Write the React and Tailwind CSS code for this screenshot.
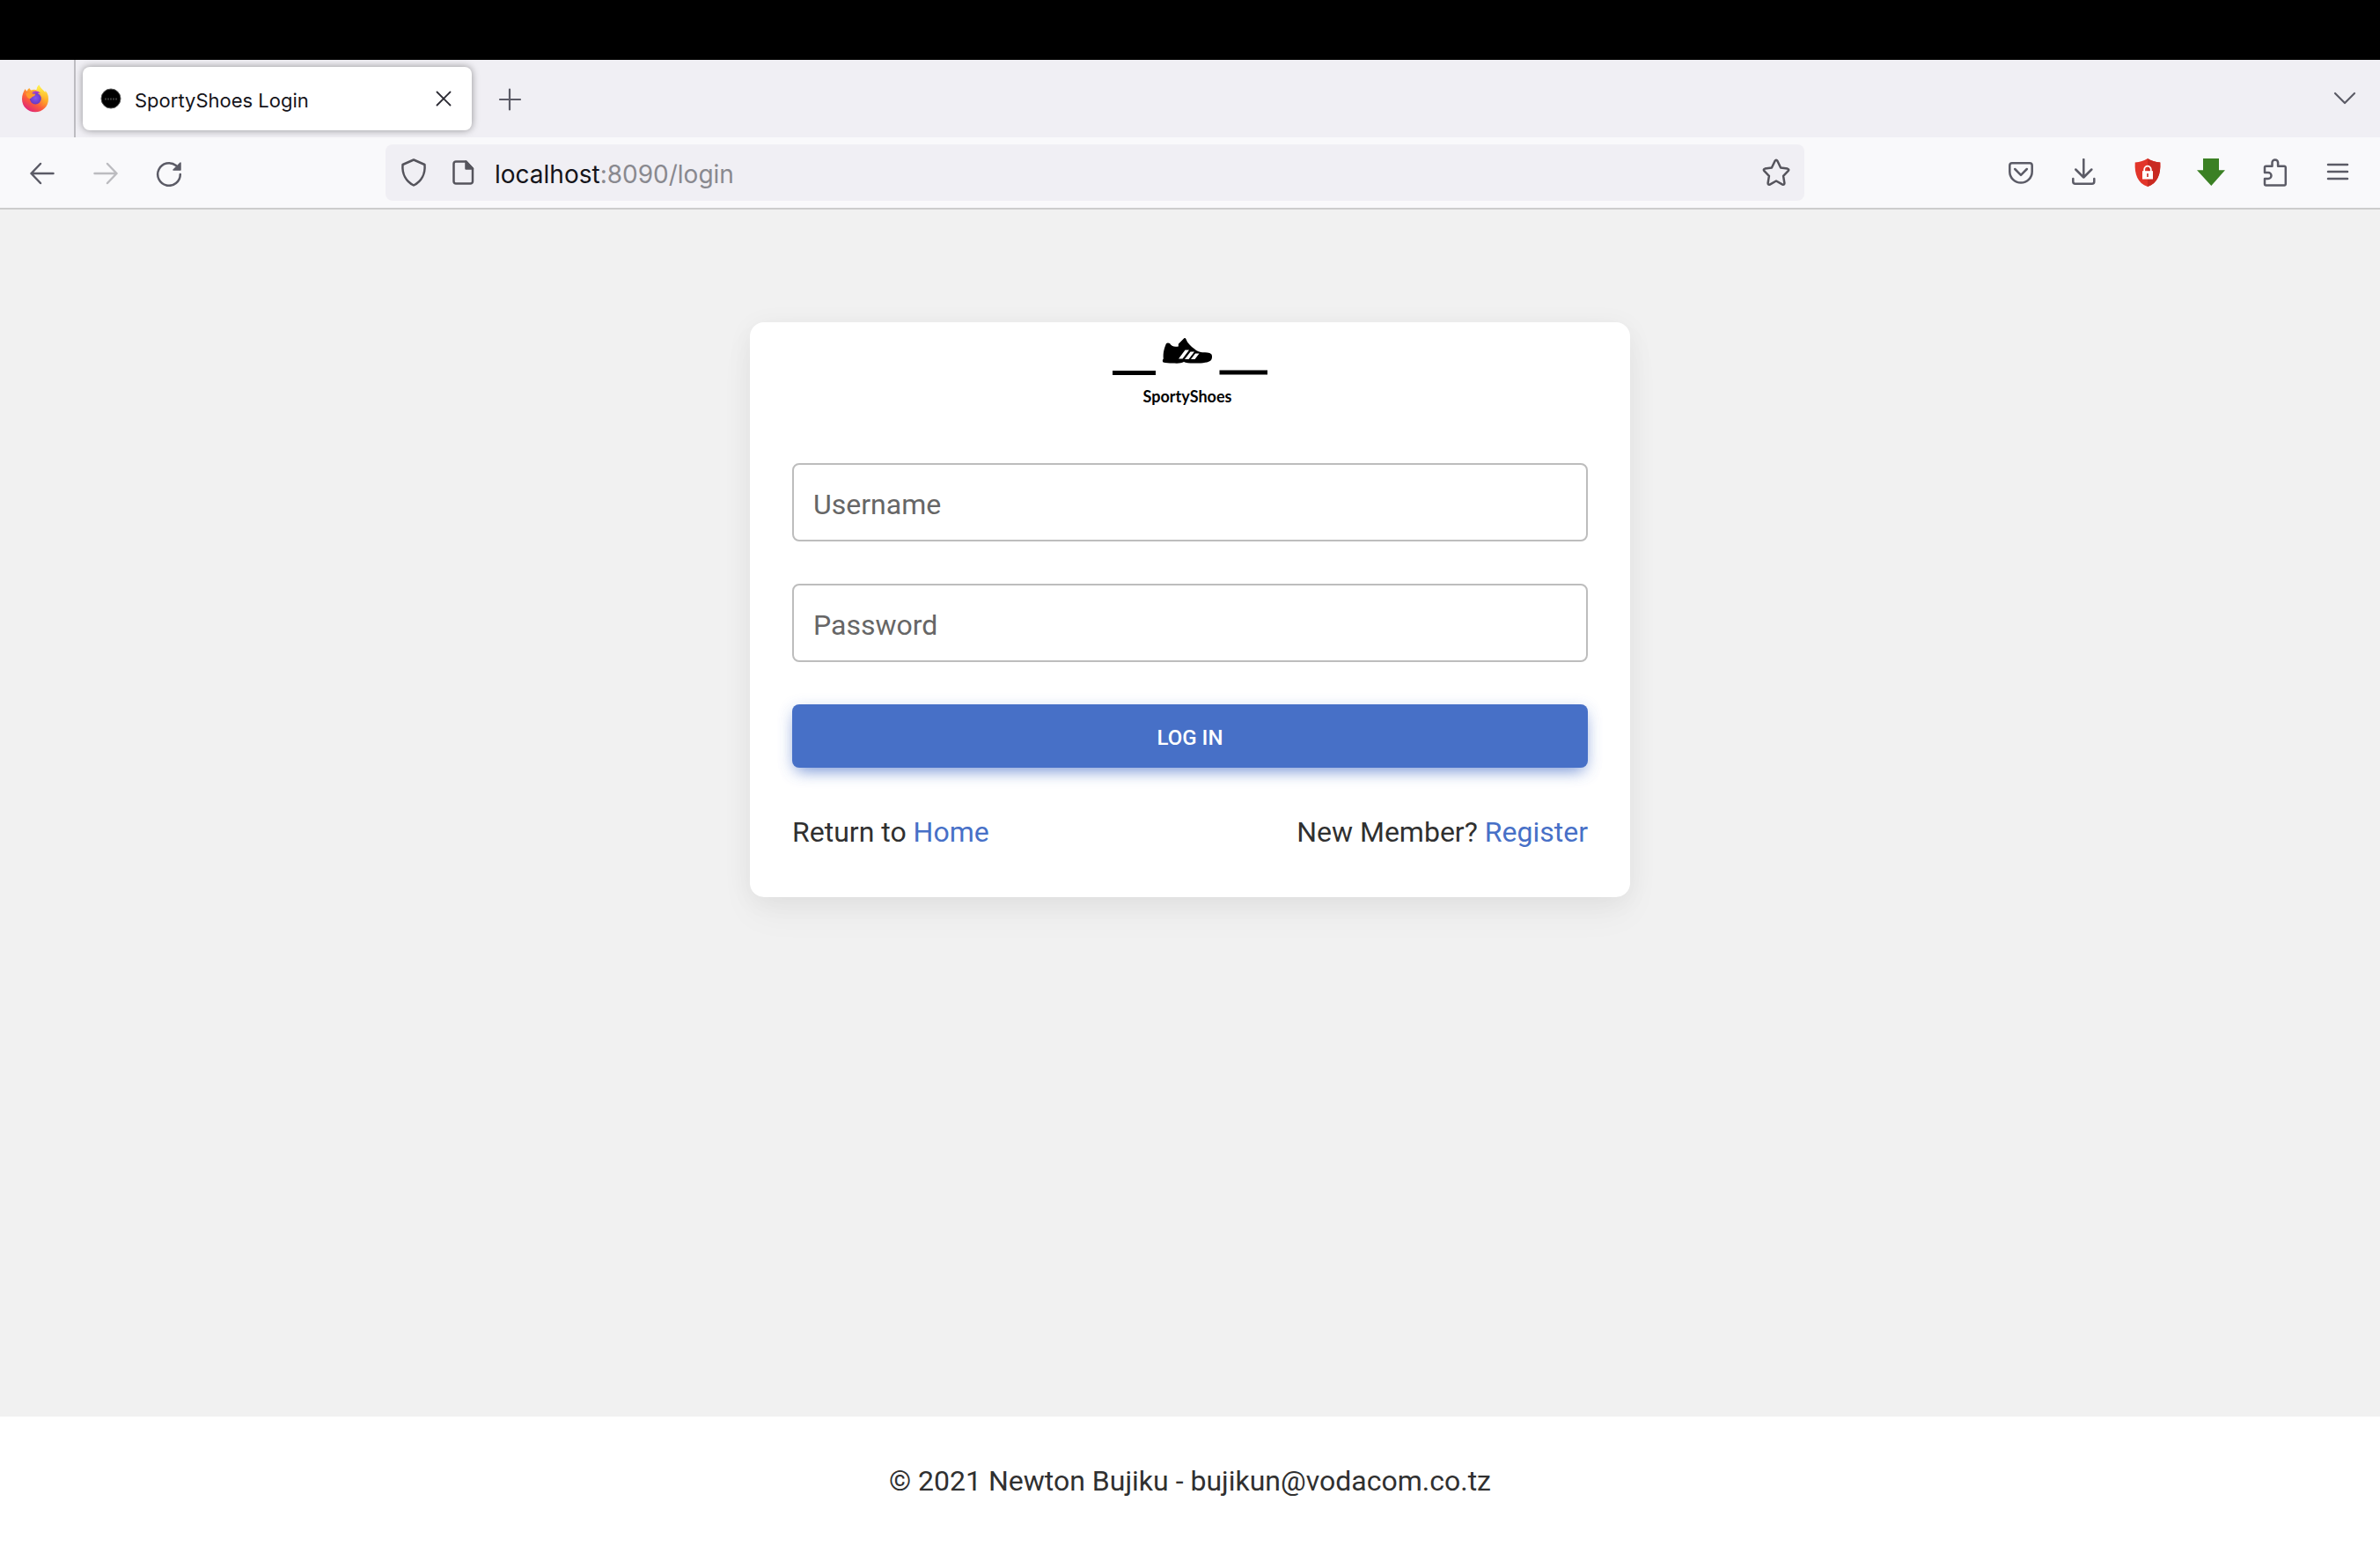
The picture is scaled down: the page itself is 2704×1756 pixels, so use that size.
import React from "react";

const ink = "#5b5b66";

function FirefoxLogo() {
  return (
    <svg className="size-8" viewBox="0 0 32 32" aria-hidden="true">
      <defs>
        <linearGradient id="fxBody" x1="0.85" y1="0.1" x2="0.25" y2="1">
          <stop offset="0" stopColor="#fff44f" />
          <stop offset="0.35" stopColor="#ffa52e" />
          <stop offset="0.65" stopColor="#fb5a3c" />
          <stop offset="1" stopColor="#dd1f80" />
        </linearGradient>
        <radialGradient id="fxGlobe" cx="0.5" cy="0.45" r="0.6">
          <stop offset="0" stopColor="#8157f5" />
          <stop offset="1" stopColor="#6a35b8" />
        </radialGradient>
        <linearGradient id="fxTail" x1="0.4" y1="0" x2="0.5" y2="1">
          <stop offset="0" stopColor="#fff44f" />
          <stop offset="1" stopColor="#ff980e" stopOpacity="0.2" />
        </linearGradient>
      </defs>
      <path d="M20.500 0.500c-1.700 1.300-2.700 3.400-2.900 5.700-1.600-.7-4.200-.8-6.100.3C10.300 5.900 9.700 4.900 9.500 4.100 8 5 7.100 6.300 6.900 7.600 6 7.200 5 6.100 4.600 5 2.700 8 1 12 1 16.500 1 25 7.600 31.300 16 31.300S31 25 31 16.500c0-4.700-1.900-7.700-3.700-9.300.3 1 .2 1.800.1 2.300C25.900 6.100 21.300 4.300 20.500.5z" fill="url(#fxBody)" />
      <circle cx="16.300" cy="16" r="6.500" fill="url(#fxGlobe)" />
      <path d="M20.500.5c-2.200 1.700-3 4.800-3 7.500 4.300 1 6.500 5 6 9.500 1.500-1.500 1.700-3.500 1.400-5 2 4 1 10-3.900 13 6-1.500 9.500-6.500 9.500-12 0-3-1.500-5-3.200-6.300.3 1 .2 1.800.1 2.300C25.900 6.100 21.300 4.300 20.500.5z" fill="url(#fxTail)" />
      <path d="M12 9.500c2-2.700 7.500-3 10 .5-1.800-.9-3-.6-3.800.1-1.900-.5-4-.6-6.200-.6z" fill="#9b2fe0" />
      <path d="M5.500 10c2-1.300 5.500-1 7 .8h3.800c.1 1.500-2 2.600-3.600 3.200-.9.400-.8 1.700-2.300 2-2.400.4-4.600-2.500-4.900-6z" fill="#ff9a2b" />
    </svg>
  );
}

function Stroke({ children, color = ink, width = 2.5, className = "size-8" }) {
  return (
    <svg className={className} viewBox="0 0 32 32" fill="none" stroke={color} strokeWidth={width} strokeLinecap="round" strokeLinejoin="round" aria-hidden="true">
      {children}
    </svg>
  );
}

function IconButton({ label, children }) {
  return (
    <button type="button" aria-label={label} className="flex size-[72px] shrink-0 items-center justify-center">
      {children}
    </button>
  );
}

function TabStrip() {
  return (
    <div className="flex h-22 items-center bg-[#f0eff4]">
      <button type="button" aria-label="Firefox View" className="flex h-full w-[86px] shrink-0 items-center border-r-2 border-[#bdbcc1] pl-6">
        <FirefoxLogo />
      </button>
      <div className="ml-2 flex h-[72px] w-[442px] items-center rounded-lg bg-white pr-3 pl-5 shadow-[0_0_8px_rgba(0,0,0,0.4)]">
        <svg className="size-6 shrink-0" viewBox="0 0 24 24" aria-hidden="true">
          <circle cx="12" cy="12" r="11" fill="#000" stroke="#555" strokeWidth="1" />
          <path d="M5 12.500h14" stroke="#3c3c3c" strokeWidth="2" strokeDasharray="2 1" />
        </svg>
        <span className="ml-[15px] flex-1 pt-1 text-[22px] leading-8 text-[#15141a]">SportyShoes Login</span>
        <button type="button" aria-label="Close tab" className="flex size-10 items-center justify-center">
          <Stroke color="#2b2a33" width={1.8}>
            <path d="M8.500 8.500l15 15M23.500 8.500l-15 15" />
          </Stroke>
        </button>
      </div>
      <button type="button" aria-label="New tab" className="ml-1 flex size-[78px] items-center justify-center">
        <Stroke width={2.200}>
          <path d="M16 5.500v23M5 17h23" />
        </Stroke>
      </button>
      <button type="button" aria-label="List all tabs" className="mr-1 ml-auto flex size-[72px] items-center justify-center">
        <Stroke width={2.200}>
          <path d="M5 10l11 11 11-11" />
        </Stroke>
      </button>
    </div>
  );
}

function Toolbar() {
  return (
    <div className="flex h-[82px] items-center border-b-2 border-[#cccccc] bg-[#f9f9fb] px-3">
      <IconButton label="Back">
        <Stroke>
          <path d="M28.500 17H3.500M14 6L3.500 17 14 28" />
        </Stroke>
      </IconButton>
      <IconButton label="Forward">
        <Stroke color="#bcbcc0">
          <path d="M3.500 17h25M18 6l10.500 11L18 28" />
        </Stroke>
      </IconButton>
      <IconButton label="Reload">
        <Stroke>
          <path d="M28.800 18A12.800 12.800 0 1 1 24 8" />
          <path d="M29 5v8h-8z" fill={ink} strokeWidth="1.500" />
        </Stroke>
      </IconButton>
      <div className="ml-[210px] flex h-16 flex-1 items-center rounded-lg bg-[#f0eff4] px-4">
        <Stroke color="#55545c">
          <path d="M16 1.500l12.500 5.500c.8 10-3.500 19-12.500 23.500C7 26 2.700 17 3.500 7z" />
        </Stroke>
        <Stroke color="#55545c" className="ml-6 size-8">
          <path d="M8 3.500h11.500l7.500 8V26a2.500 2.500 0 0 1-2.500 2.500H8A2.500 2.500 0 0 1 5.500 26V6A2.500 2.500 0 0 1 8 3.500z" />
          <path d="M19.500 3.500v8H27z" fill="#55545c" />
        </Stroke>
        <p className="ml-5 flex-1 pt-1 text-[28px] leading-10 text-[#15141a]">
          localhost<span className="text-[#89898f]">:8090/login</span>
        </p>
        <button type="button" aria-label="Bookmark this page">
          <Stroke color="#55545c">
            <path d="M14.500 3q1.500-2.500 3 0l3.600 7.500 7.700 1.100q2.300.7.800 2.600l-5.500 5.700 1.300 8.100q0 2.400-2.200 1.600L16 25.500l-7.200 4.100q-2.200.8-2.200-1.600l1.300-8.100-5.500-5.700q-1.500-1.900.8-2.600l7.700-1.100z" />
          </Stroke>
        </button>
      </div>
      <div className="ml-[210px] flex">
        <IconButton label="Save to Pocket">
          <Stroke>
            <path d="M6 5.200h20a2.700 2.700 0 0 1 2.700 2.700v7a12.700 12.700 0 0 1-25.400 0v-7A2.700 2.700 0 0 1 6 5.200z" />
            <path d="M9.200 12L16 18.800 22.800 12" />
          </Stroke>
        </IconButton>
        <IconButton label="Downloads">
          <Stroke>
            <path d="M15.300 1v20.500M6.300 12.500l9 9 9-9M3.300 23v3.200a2.500 2.500 0 0 0 2.500 2.500h19a2.500 2.500 0 0 0 2.500-2.500V23" />
          </Stroke>
        </IconButton>
        <IconButton label="Privacy extension">
          <svg className="size-8" viewBox="0 0 32 32" aria-hidden="true">
            <path d="M16 0c4 2.500 8.500 4 14.300 4.500C31 18 27.500 28 16 32 4.500 28 1 18 1.700 4.500 7.500 4 12 2.500 16 0z" fill="#e2352a" />
            <path d="M16 0c4 2.500 8.500 4 14.300 4.500C31 18 27.500 28 16 32z" fill="#c92a22" />
            <path d="M12.200 15v-2.500a3.800 3.800 0 0 1 7.600 0V15" fill="none" stroke="#fff" strokeWidth="1.800" />
            <path d="M10 14.200h12v9.300H10z" fill="#fff" />
            <path d="M15.200 17h1.600v4h-1.600z" fill="#c92a22" />
          </svg>
        </IconButton>
        <IconButton label="Download helper">
          <svg className="size-8" viewBox="0 0 32 32" aria-hidden="true">
            <path d="M7 0h18v13.300h7L16.300 31 0 13.300h7z" fill="#3b8024" />
          </svg>
        </IconButton>
        <IconButton label="Extensions">
          <Stroke>
            <path d="M5 16v-5.700a1.500 1.500 0 0 1 1.500-1.500h7V4.700a3.300 3.300 0 0 1 6.600 0v4.100h7.200a1.500 1.500 0 0 1 1.500 1.500V29a1.500 1.500 0 0 1-1.500 1.500H6.500A1.500 1.500 0 0 1 5 29v-6h4a3.500 3.500 0 0 0 0-7z" />
          </Stroke>
        </IconButton>
        <IconButton label="Open application menu">
          <Stroke>
            <path d="M5 7h22M5 15h22M5 23h22" />
          </Stroke>
        </IconButton>
      </div>
    </div>
  );
}

function BrandLogo() {
  return (
    <div className="flex flex-col items-center pt-4">
      <svg className="h-12 w-44" viewBox="0 0 176 48" aria-hidden="true">
        <path d="M0 39h49v5H0zM121.500 38.500H176V43.500h-54.500z" />
        <path d="M57.500 29.500c-1-1-.8-3 .3-4-.6-7 1-12 3-17 1-1.300 3-1.200 4.200-.4 1.500 3 5 4.400 9.800 3.400.3-1.300-.3-2 .2-3L80.500 3c1-1.400 2.500-1 3 .3 1.500 4.500 5.500 8 9.500 11 3 2.500 5 3.700 9 4 4 .2 8 0 10.300 2 1.300 2 .8 5-.3 6.700-3 3.300-12 3.700-20 3.500-5 0-9-.2-11-1.500-3 2-8 1.700-13 1.500-4-.1-7.500 0-10.500-1z" />
        <path d="M75 25.500l7.500-10h4.500l-7.500 10zM82 26l6.500-8.500h4.500L86.500 26zM89 26l5-6.500h4.500l-5 6.500z" fill="#fff" />
      </svg>
      <span className="pt-2 pr-1.5 font-['Lato'] text-[18px] leading-6 font-bold text-black">SportyShoes</span>
    </div>
  );
}

function Field({ id, label, type }) {
  return (
    <div className="grid items-center text-[32px] leading-[51px]">
      <input
        id={id}
        type={type}
        placeholder=" "
        className="peer col-start-1 row-start-1 h-[89px] w-full rounded-lg border-2 border-[#bdbdbd] bg-white px-[22px] text-[#4f4f4f]"
      />
      <label
        htmlFor={id}
        className="pointer-events-none col-start-1 row-start-1 px-6 pt-1.5 text-[#666666] peer-[:not(:placeholder-shown)]:invisible"
      >
        {label}
      </label>
    </div>
  );
}

export default function App() {
  return (
    <div className="flex min-h-screen flex-col bg-white font-['Inter',sans-serif]">
      <header>
        <div className="h-17 bg-black" />
        <TabStrip />
        <Toolbar />
      </header>
      <main className="flex-1 bg-[#f1f1f1] px-8 pt-32 font-['Roboto',sans-serif]">
        <div className="mx-auto max-w-[1000px] rounded-2xl bg-white shadow-[0_4px_30px_0_rgba(0,0,0,0.05),0_20px_40px_0_rgba(0,0,0,0.04)]">
          <BrandLogo />
          <form className="px-12 pt-16 pb-12" onSubmit={(e) => e.preventDefault()}>
            <div className="flex flex-col gap-12">
              <Field id="username" label="Username" type="text" />
              <Field id="password" label="Password" type="password" />
              <button
                type="submit"
                className="rounded-lg bg-[#4770c7] pt-5 pb-4 text-2xl leading-9 font-medium text-white shadow-[0_4px_18px_0_rgba(71,112,199,0.2),0_8px_18px_-6px_rgba(71,112,199,0.7)]"
              >
                LOG IN
              </button>
              <div className="flex justify-between text-[32px] leading-[51px] text-[#303030]">
                <p>
                  Return to <a href="#home" className="text-[#4770c7]">Home</a>
                </p>
                <p>
                  New Member? <a href="#register" className="text-[#4770c7]">Register</a>
                </p>
              </div>
            </div>
          </form>
        </div>
      </main>
      <footer className="bg-white p-12 text-center font-['Roboto',sans-serif] text-[32px] leading-[51px] text-[#303030]">
        © 2021 Newton Bujiku - bujikun@vodacom.co.tz
      </footer>
    </div>
  );
}
